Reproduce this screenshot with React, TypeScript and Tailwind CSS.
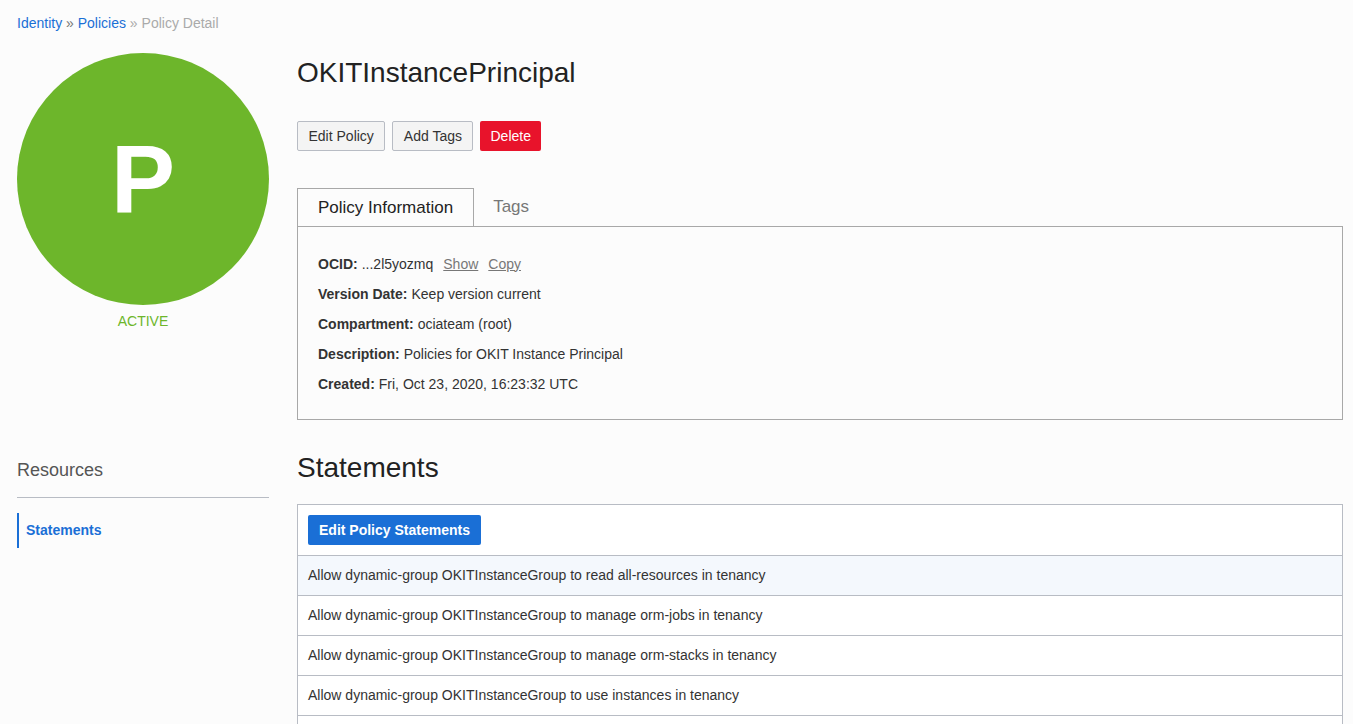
const statements = [
  "Allow dynamic-group OKITInstanceGroup to read all-resources in tenancy",
  "Allow dynamic-group OKITInstanceGroup to manage orm-jobs in tenancy",
  "Allow dynamic-group OKITInstanceGroup to manage orm-stacks in tenancy",
  "Allow dynamic-group OKITInstanceGroup to use instances in tenancy",
  "",
]

const info = [
  { label: "Version Date:", value: "Keep version current" },
  { label: "Compartment:", value: "ociateam (root)" },
  { label: "Description:", value: "Policies for OKIT Instance Principal" },
  { label: "Created:", value: "Fri, Oct 23, 2020, 16:23:32 UTC" },
]

export default function App() {
  return (
    <div
      className="min-h-screen bg-[#fcfcfc] text-[#333] px-[17px] pt-[13px]"
      style={{ fontFamily: '"Liberation Sans", Arial, sans-serif' }}
    >
      {/* breadcrumb */}
      <div className="text-[14px] leading-[20px]">
        <a className="text-[#1a6fd6]">Identity</a>
        <span className="text-[#777]"> » </span>
        <a className="text-[#1a6fd6]">Policies</a>
        <span className="text-[#aaa]"> » </span>
        <span className="text-[#aaa]">Policy Detail</span>
      </div>

      <div className="flex gap-[28px] mt-[20px]">
        {/* left column */}
        <div className="w-[252px] shrink-0">
          <div className="w-[252px] h-[252px] rounded-full bg-[#6db62b] flex items-center justify-center">
            <span className="text-white text-[96px] font-bold leading-none">P</span>
          </div>
          <div className="text-center text-[#6db62b] text-[14px] mt-[6px]">ACTIVE</div>

          <div className="mt-[126px]">
            <div className="text-[18px] font-light text-[#555] leading-[24px] pb-[15px] border-b border-[#b8bcc4]">
              Resources
            </div>
            <div className="mt-[15px] border-l-2 border-[#1a6fd6] pl-[7px] h-[35px] flex items-center">
              <span className="text-[14px] font-bold text-[#1a6fd6]">Statements</span>
            </div>
          </div>
        </div>

        {/* right column */}
        <div className="flex-1 min-w-0 mr-[-7px]">
          <h1 className="text-[28px] leading-[34px] text-[#222] mt-[3px]">OKITInstancePrincipal</h1>

          <div className="flex gap-[7px] mt-[31px]">
            <button className="h-[30px] px-[10.5px] text-[14px] text-[#333] bg-[#f4f4f4] border border-[#b8bcc4] rounded-[2px]">
              Edit Policy
            </button>
            <button className="h-[30px] px-[10.5px] text-[14px] text-[#333] bg-[#f4f4f4] border border-[#b8bcc4] rounded-[2px]">
              Add Tags
            </button>
            <button className="h-[30px] px-[10px] text-[14px] text-white bg-[#e8132b] rounded-[2px]">
              Delete
            </button>
          </div>

          {/* tabs */}
          <div className="mt-[37px]">
            <div className="flex">
              <div className="h-[38px] px-[20px] flex items-center text-[17px] text-[#222] border border-[#a8a8a8] border-b-0 bg-[#fcfcfc] relative z-10 mb-[-1px]">
                Policy Information
              </div>
              <div className="h-[38px] px-[19px] flex items-center text-[17px] text-[#777]">
                Tags
              </div>
            </div>
            <div className="border border-[#a8a8a8] h-[194px] pl-[20px] pt-[27px] text-[14px] text-[#333]">
              <div className="h-[20px] flex items-center">
                <span className="font-bold">OCID:</span>
                <span className="ml-[4px]">...2l5yozmq</span>
                <a className="ml-[10px] underline text-[#777]">Show</a>
                <a className="ml-[10px] underline text-[#777]">Copy</a>
              </div>
              {info.map((r) => (
                <div key={r.label} className="h-[20px] flex items-center mt-[10px]">
                  <span className="font-bold">{r.label}</span>
                  <span className="ml-[4px]">{r.value}</span>
                </div>
              ))}
            </div>
          </div>

          <h2 className="text-[28px] leading-[34px] text-[#222] mt-[31px]">Statements</h2>

          <div className="mt-[19px] border border-[#b8bcc4] bg-white">
            <div className="px-[10px] py-[10px]">
              <button className="h-[30px] px-[11px] text-[14px] font-bold text-white bg-[#1a6fd6] rounded-[2px]">
                Edit Policy Statements
              </button>
            </div>
            {statements.map((s, i) => (
              <div
                key={i}
                className={`h-[40px] flex items-center px-[10px] text-[14px] text-[#333] border-t border-[#b8bcc4] ${
                  i === 0 ? "bg-[#f4f8fd]" : "bg-white"
                }`}
              >
                {s}
              </div>
            ))}
          </div>
        </div>
      </div>
    </div>
  )
}
